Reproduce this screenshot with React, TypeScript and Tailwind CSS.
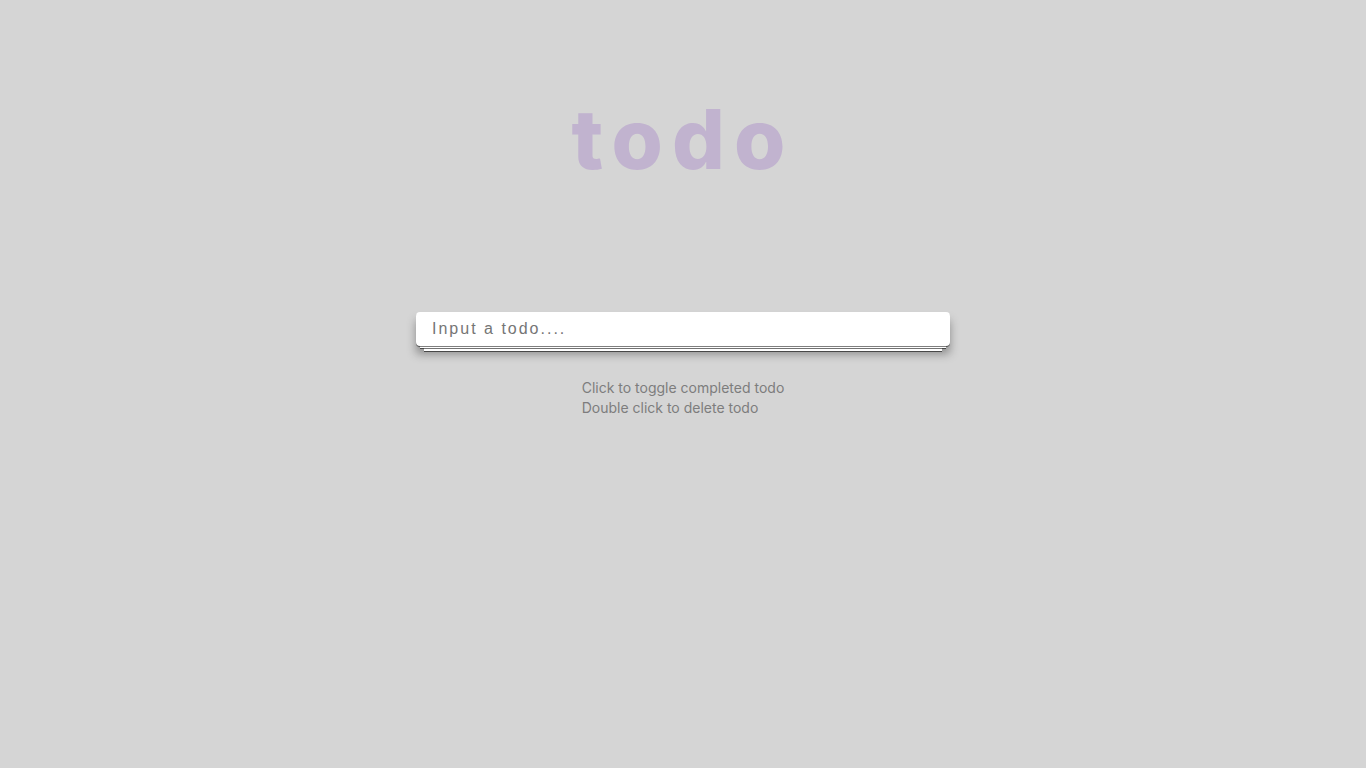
import React, { useState } from 'react';

export default function App() {
    const [text, setText] = useState('');

    return (
        <div className="min-h-screen w-full bg-[#d5d5d5] flex flex-col items-center font-['Inter',sans-serif]">
            <h1 className="mt-[98px] text-[83px] leading-none font-extrabold tracking-[0.11em] text-[#c1b3cf]">
                todo
            </h1>

            <div className="mt-[131px] w-[534px]">
                <input
                    value={text}
                    onChange={(e) => setText(e.target.value)}
                    placeholder="Input a todo...."
                    className="w-full h-[34px] rounded-[4px] bg-white px-4 text-base tracking-[2px] text-[#555] placeholder:text-[#757575] outline-none font-['Liberation_Sans',Arial,sans-serif] shadow-[0_1px_0_rgba(0,0,0,0.5),0_6px_0_-4px_#ffffff,0_7px_0_-4px_rgba(0,0,0,0.55),0_13px_0_-8px_#ffffff,0_14px_0_-8px_rgba(0,0,0,0.55),0_8px_10px_rgba(0,0,0,0.35)]"
                />
            </div>

            <div className="mt-[32px] text-sm leading-5 text-[#7d7d7d]">
                <p>Click to toggle completed todo</p>
                <p>Double click to delete todo</p>
            </div>
        </div>
    );
}
